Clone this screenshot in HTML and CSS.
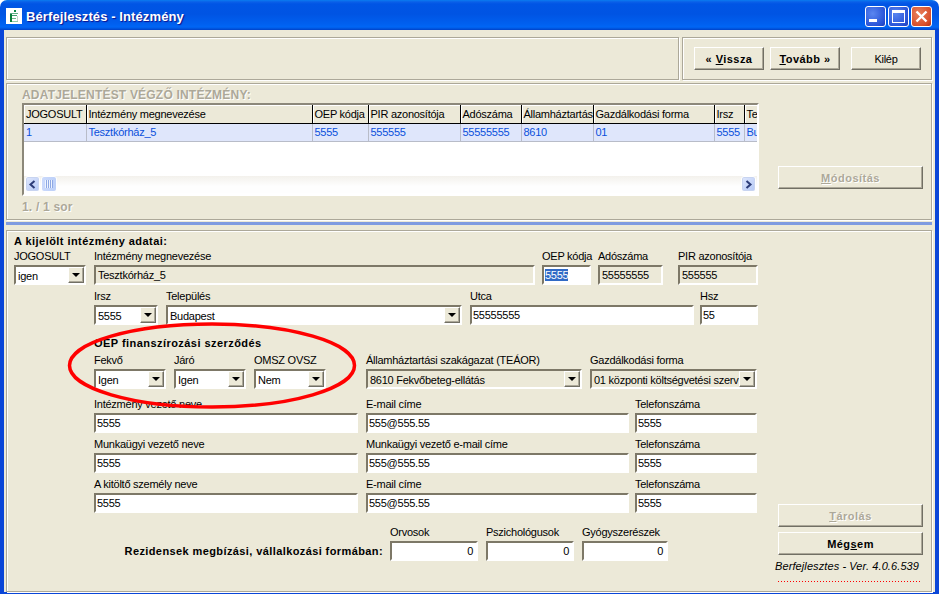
FILE: index.html
```html
<!DOCTYPE html>
<html lang="hu">
<head>
    <meta charset="UTF-8">
    <title>Bérfejlesztés - Intézmény</title>
    <link rel="stylesheet" href="styles.css">
</head>
<body>
    <div class="window">
        <!-- Title bar -->
        <div class="titlebar">
            <svg class="app-icon" width="16" height="16" viewBox="0 0 16 16">
                <rect width="16" height="16" fill="#ffffff"/>
                <rect x="8" y="2" width="2" height="2" fill="#0b8a48"/>
                <rect x="4" y="5" width="8" height="1" fill="#5fae86"/>
                <rect x="4" y="6" width="2" height="8" fill="#0b7f3c"/>
                <rect x="6" y="7" width="5" height="1" fill="#3f9e6c"/>
                <rect x="6" y="10" width="4" height="1" fill="#6fb98c"/>
                <rect x="6" y="13" width="6" height="1" fill="#8fc9a6"/>
                <rect x="11" y="8" width="1" height="5" fill="#c4d6cc"/>
            </svg>
            <span class="title-text">Bérfejlesztés - Intézmény</span>
            <div class="win-buttons">
                <div class="win-btn"><span class="glyph-min"></span></div>
                <div class="win-btn"><span class="glyph-max"></span></div>
                <div class="win-btn close">
                    <svg width="13" height="13" viewBox="0 0 13 13"><path d="M1.5 1.5 L11.5 11.5 M11.5 1.5 L1.5 11.5" stroke="#fff" stroke-width="2.4"/></svg>
                </div>
            </div>
        </div>

        <div class="client">
            <!-- Top toolbar -->
            <div class="top-row">
                <div class="panel top-empty"></div>
                <div class="panel top-nav">
                    <div class="btn nav-btn bold"><span>« <u>V</u>issza</span></div>
                    <div class="btn nav-btn bold"><span><u>T</u>ovább »</span></div>
                    <div class="btn nav-btn exit-btn">Kilép</div>
                </div>
            </div>

            <!-- Institution list -->
            <div class="panel list-panel">
                <div class="list-main">
                    <div class="disabled-title">ADATJELENTÉST VÉGZŐ INTÉZMÉNY:</div>
                    <div class="grid-box">
                        <table class="grid">
                            <colgroup>
                                <col class="c-jog"><col class="c-nev"><col class="c-oep"><col class="c-pir"><col class="c-ado">
                                <col class="c-all"><col class="c-gaz"><col class="c-irsz"><col class="c-tel">
                            </colgroup>
                            <tr>
                                <th>JOGOSULT</th><th>Intézmény megnevezése</th><th>OEP kódja</th><th>PIR azonosítója</th><th>Adószáma</th>
                                <th>Államháztartás</th><th>Gazdálkodási forma</th><th>Irsz</th><th>Te</th>
                            </tr>
                            <tr>
                                <td>1</td><td>Tesztkórház_5</td><td>5555</td><td>555555</td><td>55555555</td>
                                <td>8610</td><td>01</td><td>5555</td><td>Bu</td>
                            </tr>
                        </table>
                        <div class="hscroll">
                            <div class="sb-btn"><svg width="9" height="9" viewBox="0 0 9 9"><path d="M6.5 1 L2.5 4.5 L6.5 8" fill="none" stroke="#2c3c78" stroke-width="2"/></svg></div>
                            <div class="sb-thumb"><span></span></div>
                            <div class="sb-track"></div>
                            <div class="sb-btn"><svg width="9" height="9" viewBox="0 0 9 9"><path d="M2.5 1 L6.5 4.5 L2.5 8" fill="none" stroke="#2c3c78" stroke-width="2"/></svg></div>
                        </div>
                    </div>
                    <div class="disabled-title row-count">1. / 1 sor</div>
                </div>
                <div class="list-side">
                    <div class="btn side-btn disabled"><span><u>M</u>ódosítás</span></div>
                </div>
            </div>

            <div class="divider"></div>

            <!-- Selected institution -->
            <div class="panel form-panel">
                <div class="form-main">
                    <div class="form-title">A kijelölt intézmény adatai:</div>

                    <div class="row">
                        <div class="field w72"><label>JOGOSULT</label><div class="edit combo">igen<i class="drop"></i></div></div>
                        <div class="field w441"><label>Intézmény megnevezése</label><div class="edit readonly">Tesztkórház_5</div></div>
                        <div class="field w49 gap-7"><label>OEP kódja</label><div class="edit"><span class="selected">5555</span></div></div>
                        <div class="field w65 gap-7"><label>Adószáma</label><div class="edit readonly">55555555</div></div>
                        <div class="field w80 gap-15"><label>PIR azonosítója</label><div class="edit readonly">555555</div></div>
                    </div>

                    <div class="row indent">
                        <div class="field w64"><label>Irsz</label><div class="edit combo">5555<i class="drop"></i></div></div>
                        <div class="field w296"><label>Település</label><div class="edit combo">Budapest<i class="drop"></i></div></div>
                        <div class="field w224"><label>Utca</label><div class="edit">55555555</div></div>
                        <div class="field w58 gap-6"><label>Hsz</label><div class="edit">55</div></div>
                    </div>

                    <div class="form-title sub indent">OEP finanszírozási szerződés</div>

                    <div class="row indent">
                        <div class="field w72"><label>Fekvő</label><div class="edit combo">Igen<i class="drop"></i></div></div>
                        <div class="field w72"><label>Járó</label><div class="edit combo">Igen<i class="drop"></i></div></div>
                        <div class="field w72"><label>OMSZ OVSZ</label><div class="edit combo">Nem<i class="drop"></i></div></div>
                        <div class="field w216 gap-40"><label>Államháztartási szakágazat (TEÁOR)</label><div class="edit combo readonly">8610 Fekvőbeteg-ellátás<i class="drop"></i></div></div>
                        <div class="field w167"><label>Gazdálkodási forma</label><div class="edit combo readonly">01 központi költségvetési szerv<i class="drop"></i></div></div>
                    </div>

                    <div class="row indent contact-first">
                        <div class="field w264"><label>Intézmény vezető neve</label><div class="edit">5555</div></div>
                        <div class="field w263"><label>E-mail címe</label><div class="edit">555@555.55</div></div>
                        <div class="field w122 gap-6"><label>Telefonszáma</label><div class="edit">5555</div></div>
                    </div>
                    <div class="row indent">
                        <div class="field w264"><label>Munkaügyi vezető neve</label><div class="edit">5555</div></div>
                        <div class="field w263"><label>Munkaügyi vezető e-mail címe</label><div class="edit">555@555.55</div></div>
                        <div class="field w122 gap-6"><label>Telefonszáma</label><div class="edit">5555</div></div>
                    </div>
                    <div class="row indent">
                        <div class="field w264"><label>A kitöltő személy neve</label><div class="edit">5555</div></div>
                        <div class="field w263"><label>E-mail címe</label><div class="edit">555@555.55</div></div>
                        <div class="field w122 gap-6"><label>Telefonszáma</label><div class="edit">5555</div></div>
                    </div>

                    <div class="row residents">
                        <div class="residents-label">Rezidensek megbízási, vállalkozási formában:</div>
                        <div class="field w88"><label>Orvosok</label><div class="edit number">0</div></div>
                        <div class="field w88"><label>Pszichológusok</label><div class="edit number">0</div></div>
                        <div class="field w86"><label>Gyógyszerészek</label><div class="edit number">0</div></div>
                    </div>
                </div>

                <div class="form-side">
                    <div class="btn side-btn disabled"><span><u>T</u>árolás</span></div>
                    <div class="btn side-btn bold"><span>Még<u>s</u>em</span></div>
                    <div class="version">Berfejlesztes - Ver. 4.0.6.539</div>
                    <div class="red-dots"></div>
                </div>
            </div>
        </div>

        <!-- Hand drawn marker over the form -->
        <svg class="marker" width="296" height="96" viewBox="0 0 296 96">
            <ellipse cx="148" cy="47.5" rx="142.5" ry="41.5" fill="none" stroke="#ff0000" stroke-width="3.5"/>
        </svg>
    </div>
</body>
</html>
```

FILE: styles.css
```css
* {
    box-sizing: border-box;
}

body {
    margin: 0;
    background-color: #ffffff;
    overflow: hidden;
    font-family: 'Liberation Sans', Arial, sans-serif;
    font-size: 11px;
    letter-spacing: -0.25px;
    color: #000000;
}

.window {
    position: relative;
    width: 939px;
    height: 594px;
    display: flex;
    flex-direction: column;
}

/* title bar */
.titlebar {
    height: 30px;
    display: flex;
    align-items: center;
    padding: 2px 7px 0 6px;
    border-radius: 7px 7px 0 0;
    background: linear-gradient(#0a7cf0 0, #0a5fe8 2px, #0055e5 4px, #0054e3 14px, #0060f0 24px, #0066f5 27px, #0050d8 29px, #0040c8 30px);
}

.app-icon {
    flex: none;
}

.title-text {
    margin-left: 4px;
    font-size: 13px;
    font-weight: bold;
    color: #ffffff;
    text-shadow: 1px 1px 1px #0f1089;
    letter-spacing: 0.1px;
}

.win-buttons {
    margin-left: auto;
    display: flex;
    gap: 2px;
}

.win-btn {
    width: 21px;
    height: 21px;
    border: 1px solid #ffffff;
    border-radius: 3px;
    background: radial-gradient(circle at 35% 35%, #5a86f0, #2a55d8 70%, #1c3cb8);
    display: flex;
    align-items: center;
    justify-content: center;
    position: relative;
}

.win-btn.close {
    background: radial-gradient(circle at 35% 35%, #e8805c, #d8502c 70%, #b03014);
}

.glyph-min {
    width: 8px;
    height: 3px;
    background-color: #ffffff;
    margin: 9px 6px 0 0;
}

.glyph-max {
    width: 13px;
    height: 13px;
    border: 1px solid #ffffff;
    border-top-width: 3px;
}

/* client area */
.client {
    flex: 1;
    display: flex;
    flex-direction: column;
    background-color: #ece9d8;
    border: solid #0a46d8;
    border-width: 0 4px 2px 4px;
    padding: 7px 3px 0 2px;
}

.panel {
    border: 1px solid #aca899;
    box-shadow: inset 1px 1px 0 #ffffff, 1px 1px 0 #ffffff;
}

.top-row {
    display: flex;
    gap: 3px;
    height: 43px;
}

.top-empty {
    flex: 1;
}

.top-nav {
    width: 250px;
    display: flex;
    align-items: flex-start;
    padding: 9px 0 0 11px;
    gap: 6px;
}

.btn {
    height: 23px;
    background-color: #ece9d8;
    border: 1px solid;
    border-color: #ffffff #716f64 #716f64 #ffffff;
    box-shadow: inset -1px -1px 0 #aca899;
    display: flex;
    align-items: center;
    justify-content: center;
}

.nav-btn {
    width: 70px;
}

.exit-btn {
    margin-left: 5px;
}

.bold {
    font-weight: bold;
    letter-spacing: 0.45px;
}

.btn.disabled {
    color: #aca899;
    font-weight: bold;
    letter-spacing: 0.5px;
    text-shadow: 1px 1px 0 #ffffff;
}

.side-btn {
    width: 145px;
}

/* list */
.list-panel {
    margin-top: 3px;
    height: 137px;
    display: flex;
    padding-left: 15px;
}

.list-main {
    width: 737px;
    padding-top: 4px;
}

.disabled-title {
    height: 15px;
    line-height: 15px;
    font-size: 12px;
    font-weight: bold;
    color: #aca899;
    text-shadow: 1px 1px 0 #ffffff;
    letter-spacing: 0.2px;
}

.row-count {
    margin-top: 4px;
}

.grid-box {
    height: 93px;
    border: 2px solid;
    border-color: #8c887a #ffffff #ffffff #8c887a;
    background-color: #ffffff;
    display: flex;
    flex-direction: column;
    overflow: hidden;
}

.grid {
    table-layout: fixed;
    border-collapse: collapse;
    width: 733px;
}

.c-jog { width: 62px; }
.c-nev { width: 226px; }
.c-oep { width: 56px; }
.c-pir { width: 92px; }
.c-ado { width: 61px; }
.c-all { width: 72px; }
.c-gaz { width: 121px; }
.c-irsz { width: 30px; }
.c-tel { width: 13px; }

.grid th,
.grid td {
    padding: 0 0 0 2px;
    text-align: left;
    white-space: nowrap;
    overflow: hidden;
    font-weight: normal;
}

.grid th {
    height: 18px;
    background-color: #ece9d8;
    border-right: 1px solid #000000;
    border-bottom: 1px solid #000000;
    box-shadow: inset 1px 1px 0 #ffffff;
}

.grid td {
    height: 18px;
    background-color: #dfe6fb;
    color: #0a50dc;
    border-right: 1px solid #b8bcc8;
    border-bottom: 1px solid #b8bcc8;
}

.hscroll {
    margin-top: auto;
    margin-bottom: 1px;
    height: 17px;
    padding: 0 1px;
    display: flex;
    gap: 1px;
    background: linear-gradient(#f3f1ec, #fefefe 60%);
}

.sb-btn {
    width: 15px;
    height: 16px;
    border: 1px solid #ffffff;
    border-radius: 3px;
    background: linear-gradient(135deg, #e0e8fd, #b4c8f6);
    box-shadow: 0 0 0 1px #c8d4f0 inset;
    display: flex;
    align-items: center;
    justify-content: center;
}

.sb-thumb {
    width: 16px;
    height: 16px;
    border: 1px solid #ffffff;
    border-radius: 3px;
    background: linear-gradient(90deg, #cbdafc, #bdd0f8);
    display: flex;
    align-items: center;
    justify-content: center;
}

.sb-thumb span {
    width: 8px;
    height: 8px;
    background: repeating-linear-gradient(90deg, #eef4fe 0, #eef4fe 1px, #8ea8e4 1px, #8ea8e4 2px);
}

.sb-track {
    flex: 1;
}

.list-side {
    margin-left: 19px;
    padding-top: 82px;
}

.divider {
    height: 3px;
    margin-top: 2px;
    background-color: #7f9be0;
}

/* form */
.form-panel {
    margin-top: 5px;
    flex: 1;
    display: flex;
    padding-left: 7px;
}

.form-main {
    width: 763px;
}

.form-title {
    margin-top: 3px;
    height: 11px;
    line-height: 14px;
    font-weight: bold;
    letter-spacing: 0.45px;
}

.form-title.sub {
    margin-top: 11px;
    height: 13px;
}

.indent {
    margin-left: 80px;
}

.row {
    display: flex;
    gap: 8px;
}

.field {
    flex: none;
}

.field label {
    display: block;
    height: 20px;
    padding-top: 4px;
    line-height: 14px;
    white-space: nowrap;
}

.edit {
    height: 20px;
    line-height: 16px;
    border: 2px solid;
    border-color: #7d7867 #ffffff #ffffff #7d7867;
    background-color: #ffffff;
    padding-left: 1px;
    white-space: nowrap;
    overflow: hidden;
    position: relative;
}

.edit.readonly {
    background-color: #ece9d8;
    padding-left: 2px;
}

.edit.combo {
    line-height: 18px;
    padding-left: 2px;
    padding-right: 18px;
}

.edit.number {
    text-align: right;
    padding-right: 3px;
}

.selected {
    background-color: #316ac5;
    color: #ffffff;
}

.drop {
    position: absolute;
    right: 0;
    top: 0;
    width: 16px;
    height: 16px;
    background-color: #ece9d8;
    border: 1px solid;
    border-color: #ffffff #716f64 #716f64 #ffffff;
    box-shadow: inset -1px -1px 0 #aca899;
}

.drop::after {
    content: "";
    position: absolute;
    left: 3px;
    top: 5px;
    border: 4px solid transparent;
    border-top: 4px solid #000000;
    border-bottom: 0;
}

.w49 { width: 49px; }
.w58 { width: 58px; }
.w64 { width: 64px; }
.w65 { width: 65px; }
.w72 { width: 72px; }
.w80 { width: 80px; }
.w86 { width: 86px; }
.w88 { width: 88px; }
.w122 { width: 122px; }
.w167 { width: 167px; }
.w216 { width: 216px; }
.w224 { width: 224px; }
.w263 { width: 263px; }
.w264 { width: 264px; }
.w296 { width: 296px; }
.w441 { width: 441px; }

.gap-6 { margin-left: -2px; }
.gap-7 { margin-left: -1px; }
.gap-15 { margin-left: 7px; }
.gap-40 { margin-left: 32px; }

.contact-first {
    margin-top: 4px;
}

.residents {
    margin-top: 8px;
    align-items: flex-end;
}

.residents-label {
    width: 369px;
    margin-right: -1px;
    height: 20px;
    line-height: 20px;
    text-align: right;
    font-weight: bold;
    letter-spacing: 0.4px;
    white-space: nowrap;
}

.form-side {
    margin-left: 1px;
    padding-top: 273px;
}

.form-side .side-btn + .side-btn {
    margin-top: 5px;
}

.version {
    margin-top: 5px;
    margin-left: -3px;
    font-style: italic;
    letter-spacing: 0.1px;
    white-space: nowrap;
}

.red-dots {
    margin-top: 9px;
    width: 143px;
    height: 1px;
    background: linear-gradient(90deg, #ff0000 50%, transparent 50%) 0 0 / 3px 1px;
}

.marker {
    position: absolute;
    left: 64px;
    top: 318px;
}
```
